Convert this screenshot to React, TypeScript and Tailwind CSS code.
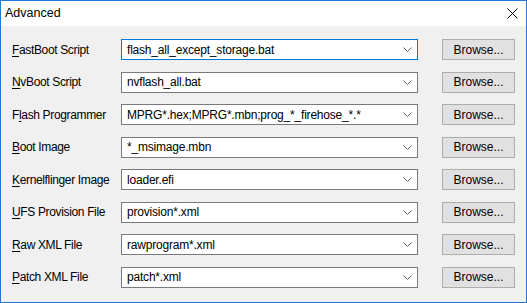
import React from 'react';

interface FieldRow {
  before: string;
  key: string;
  after: string;
  value: string;
  focused?: boolean;
}

const rows: FieldRow[] = [
  { before: '', key: 'F', after: 'astBoot Script', value: 'flash_all_except_storage.bat', focused: true },
  { before: '', key: 'N', after: 'vBoot Script', value: 'nvflash_all.bat' },
  { before: 'F', key: 'l', after: 'ash Programmer', value: 'MPRG*.hex;MPRG*.mbn;prog_*_firehose_*.*' },
  { before: '', key: 'B', after: 'oot Image', value: '*_msimage.mbn' },
  { before: '', key: 'K', after: 'ernelflinger Image', value: 'loader.efi' },
  { before: '', key: 'U', after: 'FS Provision File', value: 'provision*.xml' },
  { before: '', key: 'R', after: 'aw XML File', value: 'rawprogram*.xml' },
  { before: '', key: 'P', after: 'atch XML File', value: 'patch*.xml' },
];

function Chevron() {
  return (
    <svg width="9" height="5" viewBox="0 0 9 5" className="shrink-0">
      <path d="M0.5 0.5 L4.5 4.5 L8.5 0.5" fill="none" stroke="#606060" strokeWidth="1" />
    </svg>
  );
}

export default function App() {
  return (
    <div
      className="w-[527px] h-[303px] flex flex-col border border-[#1a7ad4] bg-[#f0f0f0] text-[12px] text-black"
      style={{ fontFamily: '"Liberation Sans", Arial, sans-serif' }}
    >
      {/* title bar */}
      <div className="h-[25px] bg-white flex items-center justify-between pl-[4px] pr-[8px]">
        <span className="text-[12.5px]">Advanced</span>
        <svg width="11" height="11" viewBox="0 0 11 11">
          <path d="M0.5 0.5 L10.5 10.5 M10.5 0.5 L0.5 10.5" stroke="#000" strokeWidth="1" />
        </svg>
      </div>

      <div className="flex-1 pt-[13px] pl-[11px] flex flex-col gap-[11.57px]">
        {rows.map((row) => (
          <div key={row.value} className="flex items-center h-[21px]">
            <div className="w-[109px] shrink-0 leading-none tracking-[-0.35px]">
              {row.before}
              <u className="underline-offset-[2px] decoration-1">{row.key}</u>
              {row.after}
            </div>
            <div
              className={`w-[297px] h-[21px] bg-white border flex items-center justify-between pl-[5px] pr-[5px] ${
                row.focused ? 'border-[#0078d7]' : 'border-[#7a7a7a]'
              }`}
            >
              <span className="leading-none whitespace-nowrap tracking-[-0.2px]">{row.value}</span>
              <Chevron />
            </div>
            <button className="ml-[24px] w-[73px] h-[21px] bg-[#e1e1e1] border border-[#adadad] flex items-center justify-center leading-none">
              Browse...
            </button>
          </div>
        ))}
      </div>
    </div>
  );
}
